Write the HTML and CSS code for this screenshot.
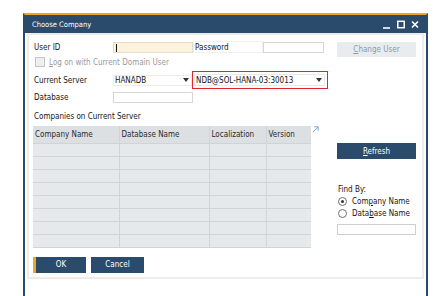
FILE: index.html
```html
<!DOCTYPE html>
<html lang="en">
<head>
  <meta charset="UTF-8" />
  <title>Choose Company</title>
  <link rel="stylesheet" href="styles.css">
</head>
<body>
  <div class="window">
    <div class="titlebar">
      <span class="title">Choose Company</span>
      <div class="win-controls">
        <svg width="8" height="9" viewBox="0 0 8 9"><path d="M0 8h7" stroke="#fff" stroke-width="1.6"/></svg>
        <svg width="8" height="9" viewBox="0 0 8 9"><rect x="0.8" y="1.3" width="6.4" height="6.4" fill="none" stroke="#fff" stroke-width="1.5"/></svg>
        <svg width="8" height="9" viewBox="0 0 8 9"><path d="M1 1.5l6 6M7 1.5l-6 6" stroke="#fff" stroke-width="1.6"/></svg>
      </div>
    </div>

    <div class="frame">
      <div class="dialog">
        <div class="left-col">
          <div class="field-row row-user">
            <span class="lbl">User ID</span>
            <span class="input input-user"><span class="caret"></span></span>
            <span class="lbl-box">Password</span>
            <span class="input input-pass"></span>
          </div>

          <div class="field-row row-check">
            <span class="checkbox"></span>
            <span class="check-label"><u>L</u>og on with Current Domain User</span>
          </div>

          <div class="field-row row-server">
            <span class="lbl">Current Server</span>
            <span class="select select-server">HANADB<span class="arrow"></span></span>
            <span class="highlight">
              <span class="select select-db">NDB@SOL-HANA-03:30013<span class="arrow"></span></span>
            </span>
          </div>

          <div class="field-row row-db">
            <span class="lbl">Database</span>
            <span class="input input-db"></span>
          </div>

          <div class="section-label">Companies on Current Server</div>

          <div class="table-wrap">
            <table class="company-table">
              <thead>
                <tr>
                  <th class="c1">Company Name</th>
                  <th class="c2">Database Name</th>
                  <th class="c3">Localization</th>
                  <th class="c4">Version</th>
                </tr>
              </thead>
              <tbody>
                <tr><td></td><td></td><td></td><td></td></tr>
                <tr><td></td><td></td><td></td><td></td></tr>
                <tr><td></td><td></td><td></td><td></td></tr>
                <tr><td></td><td></td><td></td><td></td></tr>
                <tr><td></td><td></td><td></td><td></td></tr>
                <tr><td></td><td></td><td></td><td></td></tr>
                <tr><td></td><td></td><td></td><td></td></tr>
                <tr><td></td><td></td><td></td><td></td></tr>
              </tbody>
            </table>
            <svg class="expand" width="7" height="7" viewBox="0 0 7 7">
              <path d="M0.8 6.2L6 1M2.2 0.8H6.2V4.8" fill="none" stroke="#7ea6d6" stroke-width="1"/>
            </svg>
          </div>

          <div class="actions">
            <button class="btn btn-ok">OK</button>
            <button class="btn">Cancel</button>
          </div>
        </div>

        <div class="right-col">
          <button class="btn-disabled"><u>C</u>hange User</button>
          <button class="btn btn-refresh"><u>R</u>efresh</button>
          <div class="find-label">Find By:</div>
          <div class="radio-row"><span class="radio checked"></span>Com<u>p</u>any Name</div>
          <div class="radio-row"><span class="radio"></span>Data<u>b</u>ase Name</div>
          <span class="input input-find"></span>
        </div>
      </div>
    </div>
  </div>
</body>
</html>
```

FILE: styles.css
```css
:root {
  --sap-blue: #2b4b6c;
  --sap-gold: #eca823;
  --grid-bg: #e5e9ec;
  --grid-head: #dde0e3;
  --grid-line: #d0d4d7;
}

body {
  margin: 0;
  height: 296px;
  overflow: hidden;
  background: #fff;
  font-family: "DejaVu Sans Condensed", "Liberation Sans", sans-serif;
  font-size: 8px;
  color: #151515;
}

.window {
  margin: 13px 0 0 23px;
  width: 405px;
  height: 283px;
  box-sizing: border-box;
  border-top: 2px solid var(--sap-gold);
  border-left: 2px solid var(--sap-blue);
  border-right: 2px solid var(--sap-blue);
  background: #fff;
}

.titlebar {
  height: 18px;
  background: var(--sap-blue);
  color: #fff;
  display: flex;
  align-items: center;
  justify-content: space-between;
  padding: 0 7px;
}

.title {
  font-size: 7.5px;
}

.win-controls {
  display: flex;
  gap: 6px;
  padding-top: 1px;
}

.frame {
  margin: 0 2px;
  height: 246px;
  box-sizing: border-box;
  border: 2px solid #ececec;
}

.dialog {
  display: flex;
  gap: 9px;
  padding: 6px 0 0 4px;
}

.left-col {
  width: 295px;
}

.right-col {
  width: 80px;
  display: flex;
  flex-direction: column;
}

.field-row {
  display: flex;
  align-items: center;
}

.lbl {
  width: 80px;
  padding-left: 1px;
  box-sizing: border-box;
}

.input {
  display: block;
  height: 11px;
  box-sizing: border-box;
  border: 1px solid #d6d6d6;
  background: #fff;
}

.row-user {
  height: 12px;
}

.input-user {
  width: 80px;
  background: #fdf2dc;
  border-color: #e2dccb;
  position: relative;
}

.caret {
  position: absolute;
  left: 2px;
  top: 1px;
  width: 1px;
  height: 8px;
  background: #111;
}

.lbl-box {
  width: 70px;
  height: 12px;
  line-height: 11px;
  box-sizing: border-box;
  border: 1px solid #f1f1f1;
  padding-left: 1px;
}

.input-pass {
  width: 61px;
}

.row-check {
  margin-top: 4px;
  height: 10px;
  padding-left: 2px;
}

.checkbox {
  width: 10px;
  height: 10px;
  box-sizing: border-box;
  border: 1px solid #c4c4c4;
  background: #efefef;
  margin-right: 4px;
}

.check-label {
  color: #9a9a9a;
}

.check-label u,
.right-col u {
  text-decoration-thickness: 1px;
}

.row-server {
  margin-top: 4px;
  height: 18px;
}

.select {
  display: flex;
  align-items: center;
  height: 11px;
  box-sizing: border-box;
  padding-left: 1px;
}

.select-server {
  width: 79px;
  border: 1px solid #ececec;
}

.arrow {
  margin-left: auto;
  margin-right: 2px;
  width: 0;
  height: 0;
  border-left: 3px solid transparent;
  border-right: 3px solid transparent;
  border-top: 4px solid #333;
}

.highlight {
  width: 136px;
  height: 18px;
  box-sizing: border-box;
  border: 1px solid #e0232d;
  padding: 2px 2px 2px 1px;
}

.select-db {
  border: 1px solid #e8e8e8;
  height: 12px;
}

.row-db {
  margin-top: 3px;
  height: 11px;
}

.input-db {
  width: 80px;
}

.section-label {
  margin-top: 9px;
  height: 10px;
  line-height: 10px;
  padding-left: 1px;
}

.table-wrap {
  margin-top: 4px;
  display: flex;
  align-items: flex-start;
  gap: 1px;
}

.company-table {
  width: 278px;
  border-collapse: collapse;
  background: var(--grid-bg);
  table-layout: fixed;
}

.company-table th,
.company-table td {
  box-sizing: border-box;
  border: 1px solid var(--grid-line);
  padding: 0 0 0 2px;
  text-align: left;
  font-weight: normal;
}

.company-table th {
  height: 17px;
  background: var(--grid-head);
  border-top: none;
  color: #2a2a2a;
}

.company-table td {
  height: 13px;
}

.company-table tr > :first-child {
  border-left: none;
}

.company-table tr > :last-child {
  border-right: none;
}

.c1 { width: 86px; }
.c2 { width: 90px; }
.c3 { width: 57px; }
.c4 { width: 45px; }

.actions {
  margin-top: 9px;
  display: flex;
  gap: 5px;
}

.btn {
  width: 53px;
  height: 16px;
  border: none;
  padding: 0;
  background: var(--sap-blue);
  color: #fff;
  font-family: inherit;
  font-size: 8px;
}

.btn-ok {
  border-left: 3px solid var(--sap-gold);
}

.btn-disabled {
  margin-top: 1px;
  width: 79px;
  height: 15px;
  border: none;
  padding: 0;
  background: #e8ecef;
  color: #8a9aab;
  font-family: inherit;
  font-size: 8px;
}

.btn-refresh {
  margin-top: 86px;
  width: 79px;
}

.find-label {
  margin-top: 26px;
  height: 10px;
  line-height: 10px;
  padding-left: 1px;
}

.radio-row {
  height: 12px;
  display: flex;
  align-items: center;
  padding-left: 1px;
}

.radio {
  width: 9px;
  height: 9px;
  box-sizing: border-box;
  border: 1px solid #6f6f6f;
  border-radius: 50%;
  margin-right: 5px;
  position: relative;
  background: #fff;
}

.radio.checked::after {
  content: "";
  position: absolute;
  left: 2px;
  top: 2px;
  width: 3px;
  height: 3px;
  border-radius: 50%;
  background: #333;
}

.input-find {
  margin-top: 5px;
  width: 79px;
  border-color: #cfcfcf;
}
```
